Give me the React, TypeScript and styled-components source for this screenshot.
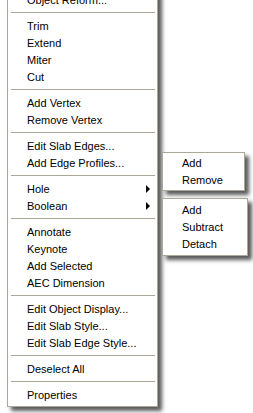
import React from "react";
import styled, { createGlobalStyle } from "styled-components";

const GlobalStyle = createGlobalStyle`
  html, body { margin: 0; padding: 0; background: #ffffff; overflow: hidden; }
  #root { width: 253px; height: 413px; }
`;

const Stage = styled.div`
  position: relative;
  width: 253px;
  height: 413px;
  overflow: hidden;
  background: #ffffff;
  font-family: "Liberation Sans", Arial, sans-serif;
  font-size: 11px;
  color: #000000;
`;

const MainMenu = styled.div`
  box-sizing: border-box;
  width: 151px;
  margin-left: 7px;
  margin-top: -13px;
  padding: 3px 0;
  background: #ffffff;
  border: 1px solid #aca899;
  box-shadow: 4px 4px 4px rgba(0, 0, 0, 0.65);
  display: flex;
  flex-direction: column;
`;

const SubMenu = styled.div<{ $top: number; $width: number; $pt: number; $pb: number }>`
  position: absolute;
  left: 162px;
  top: ${(p) => p.$top}px;
  box-sizing: border-box;
  width: ${(p) => p.$width}px;
  padding: ${(p) => p.$pt}px 0 ${(p) => p.$pb}px;
  background: #ffffff;
  border: 1px solid #aca899;
  box-shadow: 4px 4px 4px rgba(0, 0, 0, 0.65);
  display: flex;
  flex-direction: column;
`;

const Item = styled.div`
  box-sizing: border-box;
  height: 17px;
  display: flex;
  align-items: center;
  justify-content: space-between;
  padding: 1px 7px 0 19px;
  white-space: nowrap;
  line-height: 16px;
`;

const Separator = styled.div`
  height: 9px;
  display: flex;
  align-items: center;
  padding: 0 2px 0 3px;
  &::after {
    content: "";
    flex: 1;
    height: 1px;
    background: #aca899;
  }
`;

const Arrow = styled.span`
  width: 0;
  height: 0;
  border-top: 4px solid transparent;
  border-bottom: 4px solid transparent;
  border-left: 4px solid #000000;
`;

type Entry = { label: string; sub?: boolean } | "sep";

const mainEntries: Entry[] = [
  { label: "Object Reform..." },
  "sep",
  { label: "Trim" },
  { label: "Extend" },
  { label: "Miter" },
  { label: "Cut" },
  "sep",
  { label: "Add Vertex" },
  { label: "Remove Vertex" },
  "sep",
  { label: "Edit Slab Edges..." },
  { label: "Add Edge Profiles..." },
  "sep",
  { label: "Hole", sub: true },
  { label: "Boolean", sub: true },
  "sep",
  { label: "Annotate" },
  { label: "Keynote" },
  { label: "Add Selected" },
  { label: "AEC Dimension" },
  "sep",
  { label: "Edit Object Display..." },
  { label: "Edit Slab Style..." },
  { label: "Edit Slab Edge Style..." },
  "sep",
  { label: "Deselect All" },
  "sep",
  { label: "Properties" },
];

export default function App() {
  return (
    <Stage>
      <GlobalStyle />
      <MainMenu>
        {mainEntries.map((e, i) =>
          e === "sep" ? (
            <Separator key={i} />
          ) : (
            <Item key={i}>
              <span>{e.label}</span>
              {e.sub && <Arrow />}
            </Item>
          )
        )}
      </MainMenu>
      <SubMenu $top={152} $width={83} $pt={1} $pb={2}>
        <Item>Add</Item>
        <Item>Remove</Item>
      </SubMenu>
      <SubMenu $top={198} $width={86} $pt={2} $pb={3}>
        <Item>Add</Item>
        <Item>Subtract</Item>
        <Item>Detach</Item>
      </SubMenu>
    </Stage>
  );
}
